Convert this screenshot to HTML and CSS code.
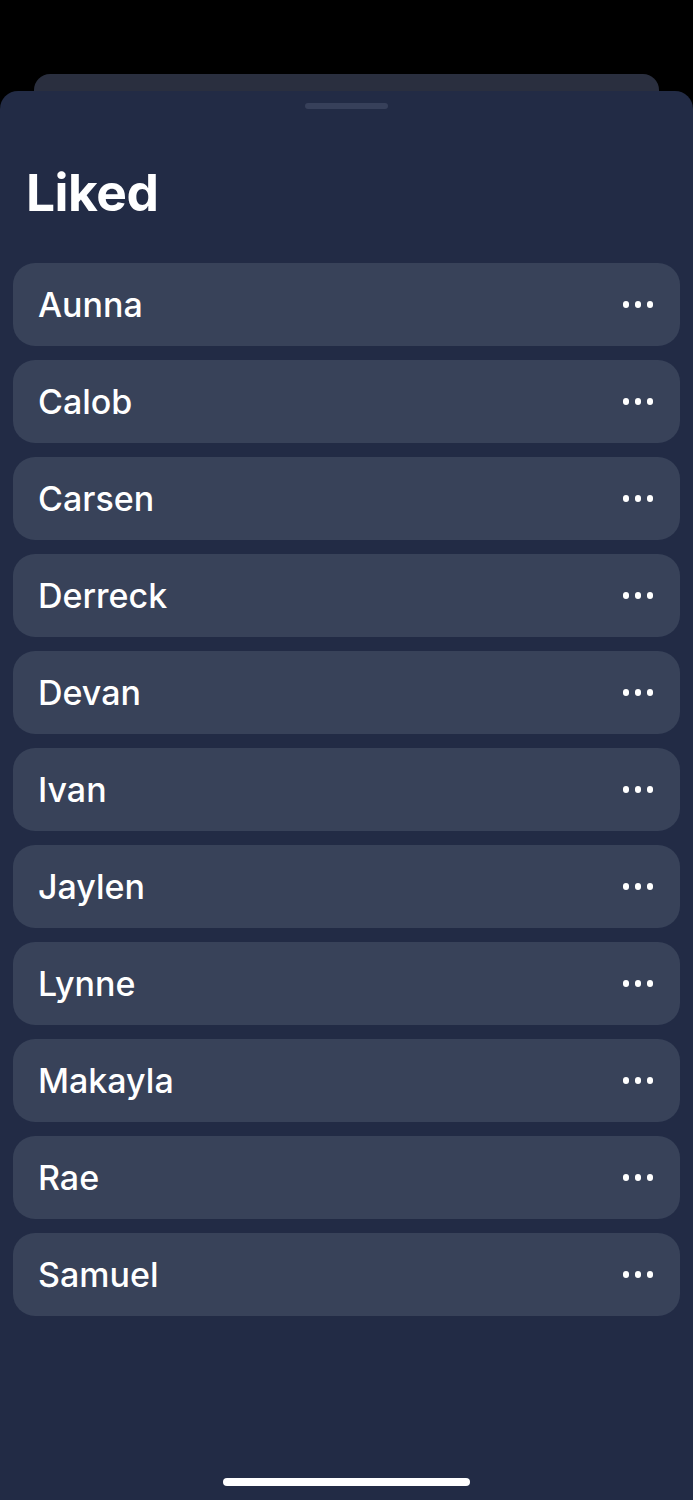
FILE: index.html
```html
<!DOCTYPE html>
<html>
<head>
<meta charset="utf-8">
<link rel="stylesheet" href="styles.css">
</head>
<body>
<div class="screen">
  <div class="back-card"></div>
  <div class="sheet">
    <div class="grabber"></div>
    <h1 class="title">Liked</h1>
    <ul class="list">
      <li class="row"><span class="name">Aunna</span><span class="more"><i></i><i></i><i></i></span></li>
      <li class="row"><span class="name">Calob</span><span class="more"><i></i><i></i><i></i></span></li>
      <li class="row"><span class="name">Carsen</span><span class="more"><i></i><i></i><i></i></span></li>
      <li class="row"><span class="name">Derreck</span><span class="more"><i></i><i></i><i></i></span></li>
      <li class="row"><span class="name">Devan</span><span class="more"><i></i><i></i><i></i></span></li>
      <li class="row"><span class="name">Ivan</span><span class="more"><i></i><i></i><i></i></span></li>
      <li class="row"><span class="name">Jaylen</span><span class="more"><i></i><i></i><i></i></span></li>
      <li class="row"><span class="name">Lynne</span><span class="more"><i></i><i></i><i></i></span></li>
      <li class="row"><span class="name">Makayla</span><span class="more"><i></i><i></i><i></i></span></li>
      <li class="row"><span class="name">Rae</span><span class="more"><i></i><i></i><i></i></span></li>
      <li class="row"><span class="name">Samuel</span><span class="more"><i></i><i></i><i></i></span></li>
    </ul>
    <div class="home-indicator"></div>
  </div>
</div>
</body>
</html>
```

FILE: styles.css
```css
html, body {
  margin: 0;
  padding: 0;
  background: #000;
}
body {
  font-family: Inter, "Liberation Sans", sans-serif;
  color: #fff;
}
.screen {
  width: 693px;
  height: 1500px;
  overflow: hidden;
  padding-top: 74px;
  box-sizing: border-box;
  display: flex;
  flex-direction: column;
}
.back-card {
  height: 30px;
  margin: 0 34px;
  background: #2a2f3f;
  border-radius: 16px 16px 0 0;
  flex: none;
}
.sheet {
  margin-top: -13px;
  flex: 1;
  background: #222b45;
  border-radius: 18px 18px 0 0;
  display: flex;
  flex-direction: column;
  align-items: stretch;
  position: relative;
}
.grabber {
  width: 83px;
  height: 6px;
  border-radius: 3px;
  background: #37405a;
  margin: 12px auto 0;
}
.title {
  margin: 0;
  padding: 0 0 0 26px;
  font-size: 51.5px;
  font-weight: 700;
  line-height: 60px;
  margin-top: 53px;
  letter-spacing: -0.5px;
}
.list {
  list-style: none;
  margin: 41px 0 0;
  padding: 0 13px;
  display: flex;
  flex-direction: column;
  gap: 14px;
}
.row {
  height: 83px;
  border-radius: 22px;
  background: #384259;
  display: flex;
  align-items: center;
  justify-content: space-between;
  padding: 0 27px 0 25px;
}
.name {
  font-size: 34px;
  font-weight: 450;
}
.more {
  display: flex;
  gap: 5.5px;
  align-items: center;
}
.more i {
  display: block;
  width: 6.5px;
  height: 6.5px;
  border-radius: 50%;
  background: #fff;
}
.home-indicator {
  position: absolute;
  left: 223px;
  width: 247px;
  bottom: 14px;
  height: 8px;
  border-radius: 4px;
  background: #fff;
}
```
